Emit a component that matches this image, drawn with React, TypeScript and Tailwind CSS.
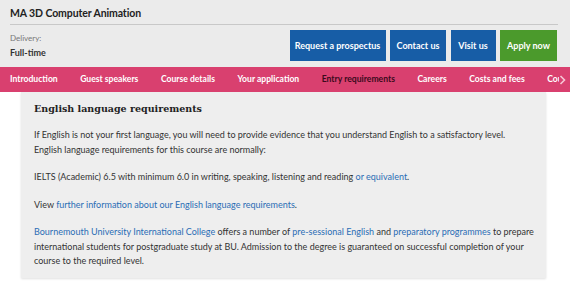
// Course page header with section nav and entry requirements card

const navItems = [
  "Introduction",
  "Guest speakers",
  "Course details",
  "Your application",
  "Entry requirements",
  "Careers",
  "Costs and fees",
  "Course fees",
];

function Link({ children }: { children: React.ReactNode }) {
  return <a className="text-[#2a6db5]">{children}</a>;
}

export default function App() {
  return (
    <div className="w-[570px] h-[284px] overflow-hidden bg-white font-['Lato',sans-serif] text-[#333]">
      {/* Header */}
      <div className="bg-[#ebebeb] px-[10px] pt-[5px]">
        <h1 className="text-[10.5px] font-bold text-[#222] leading-[16px] pb-[3px] border-b border-[#c8c8c8] mr-[2px] tracking-[-0.1px]">
          MA 3D Computer Animation
        </h1>
        <div className="flex justify-between items-start pt-[5px] pb-[6px] pr-[3px]">
          <div className="pt-[2px]">
            <div className="text-[8px] text-[#777] leading-[12px]">Delivery:</div>
            <div className="text-[9px] font-bold text-[#333] leading-[12px] mt-[3px]">Full-time</div>
          </div>
          <div className="flex gap-[4.5px]">
            <button className="h-[31px] w-[96px] bg-[#175da6] text-white text-[9px] font-bold">Request a prospectus</button>
            <button className="h-[31px] w-[56px] bg-[#175da6] text-white text-[9px] font-bold">Contact us</button>
            <button className="h-[31px] w-[45px] bg-[#175da6] text-white text-[9px] font-bold">Visit us</button>
            <button className="h-[31px] w-[57px] bg-[#4b9a2c] text-white text-[9px] font-bold">Apply now</button>
          </div>
        </div>
      </div>

      {/* Section nav */}
      <div className="relative h-[25px] bg-[#d9406f] flex items-center px-[10px] gap-[22.5px] overflow-hidden whitespace-nowrap">
        {navItems.map((item) => (
          <span
            key={item}
            className={
              "text-[8.6px] font-bold " +
              (item === "Entry requirements" ? "text-[#3b0a1c]" : "text-white")
            }
          >
            {item}
          </span>
        ))}
        <div className="absolute right-0 top-0 h-[25px] w-[11px] bg-[#d9406f] flex items-center justify-start">
          <svg width="7" height="10" viewBox="0 0 7 10">
            <path d="M1.5 1 L5.5 5 L1.5 9" stroke="#f6c7d5" strokeWidth="1.6" fill="none" />
          </svg>
        </div>
      </div>

      {/* Entry requirements card */}
      <div className="ml-[21px] w-[525px] bg-[#eeeeee] shadow-[0_1px_2px_rgba(0,0,0,0.12)] pl-[13px] pr-[6px] pt-[10px] pb-[9px] text-[9px] leading-[14.5px]">
        <h2 className="font-['DejaVu_Serif',serif] font-bold text-[9.5px] text-[#222] leading-[14px] mb-[12px]">
          English language requirements
        </h2>
        <p>
          If English is not your first language, you will need to provide evidence that you understand English to a satisfactory level.
          <br />
          English language requirements for this course are normally:
        </p>
        <p className="mt-[13px]">
          IELTS (Academic) 6.5 with minimum 6.0 in writing, speaking, listening and reading <Link>or equivalent</Link>.
        </p>
        <p className="mt-[13px]">
          View <Link>further information about our English language requirements</Link>.
        </p>
        <p className="mt-[13px]">
          <Link>Bournemouth University International College</Link> offers a number of <Link>pre-sessional English</Link> and{" "}
          <Link>preparatory programmes</Link> to prepare
          <br />
          international students for postgraduate study at BU. Admission to the degree is guaranteed on successful completion of your
          <br />
          course to the required level.
        </p>
      </div>
    </div>
  );
}
